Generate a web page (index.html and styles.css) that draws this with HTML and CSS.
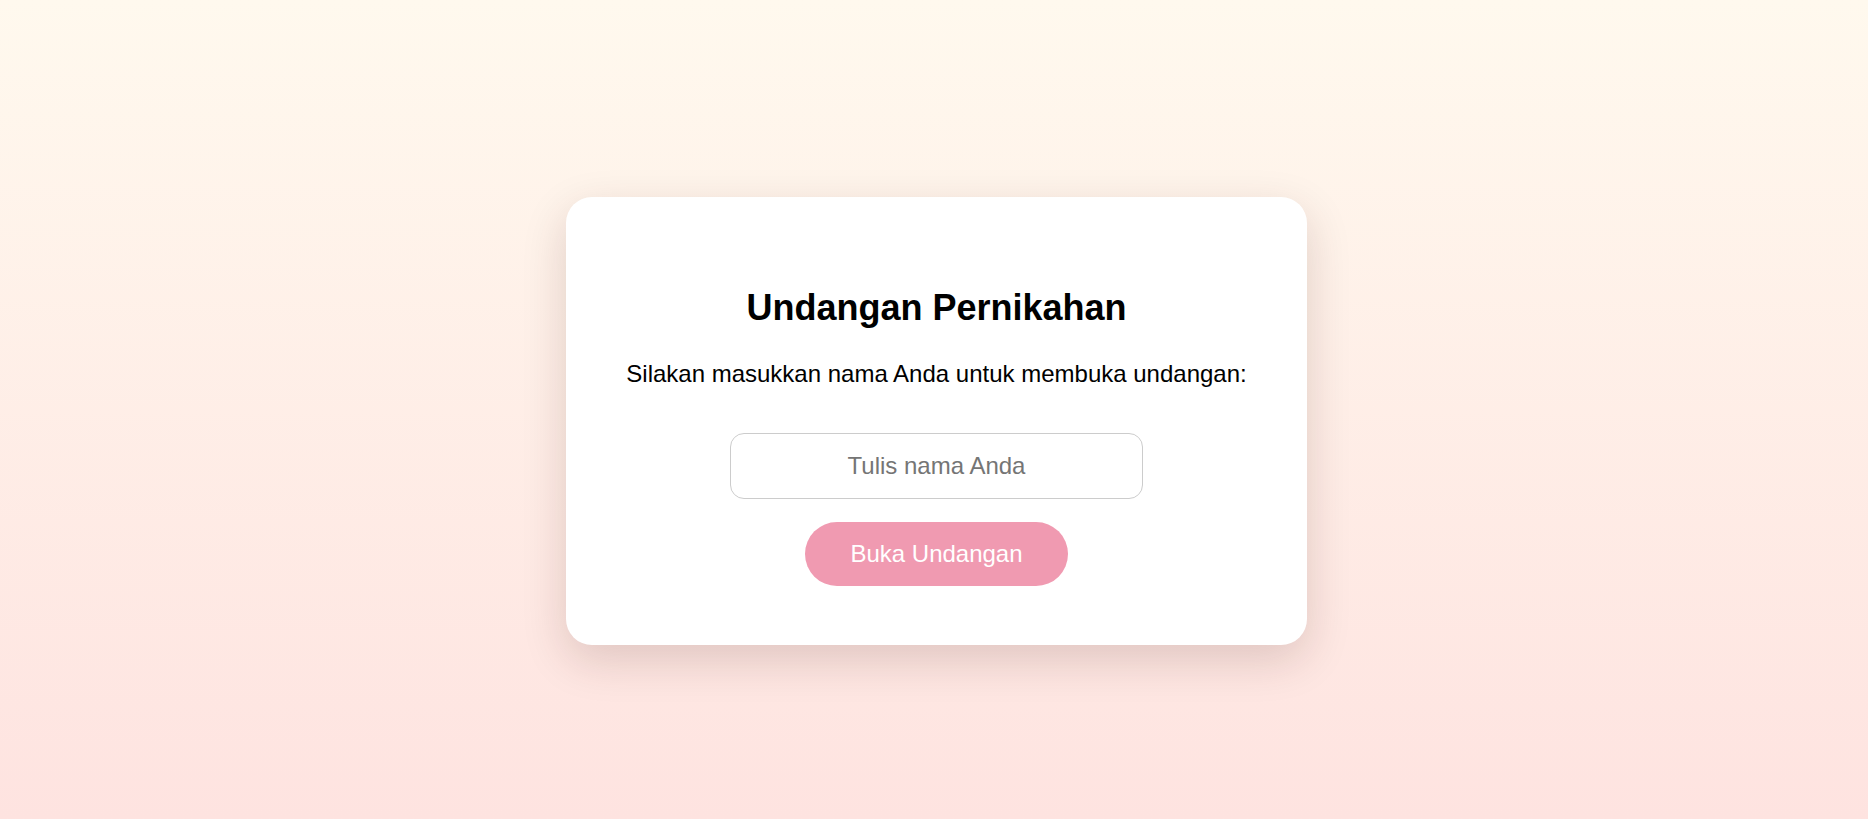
FILE: index.html
```html
<!DOCTYPE html>
<html lang="id">
<head>
<meta charset="utf-8">
<title>Undangan Pernikahan</title>
<link rel="stylesheet" href="styles.css">
</head>
<body>
<main class="stage">
  <section class="card">
    <h2 class="title">Undangan Pernikahan</h2>
    <p class="lead">Silakan masukkan nama Anda untuk membuka undangan:</p>
    <input class="name-input" type="text" placeholder="Tulis nama Anda">
    <button class="open-btn" type="button">Buka Undangan</button>
  </section>
</main>
</body>
</html>
```

FILE: styles.css
```css
* { box-sizing: border-box; }
html, body {
  margin: 0;
  height: 100%;
}
body {
  font-family: "Liberation Sans", Arial, sans-serif;
  background: linear-gradient(to bottom, #fff9ee 0%, #fee3e0 100%);
  color: #000;
}
.stage {
  min-height: 100vh;
  display: flex;
  align-items: center;
  justify-content: center;
  padding: 23px 0 0 5px;
}
.card {
  width: 741px;
  background: #fff;
  border-radius: 26px;
  box-shadow: 0 15px 45px rgba(60, 20, 10, 0.16);
  padding: 60px 40px 59px;
  display: flex;
  flex-direction: column;
  align-items: center;
  text-align: center;
}
.title {
  font-size: 36px;
  font-weight: bold;
  line-height: 41px;
  margin: 30px 0 32px;
}
.lead {
  font-size: 24px;
  line-height: 27px;
  margin: 0 0 46px;
}
.name-input {
  width: 413px;
  height: 66px;
  border: 1.5px solid #ccc;
  border-radius: 14px;
  font-family: "Liberation Sans", Arial, sans-serif;
  font-size: 24px;
  text-align: center;
  padding: 0 18px;
  background: #fff;
  outline: none;
}
.name-input::placeholder { color: #757575; }
.open-btn {
  margin-top: 23px;
  height: 64px;
  padding: 0 45px;
  border: none;
  border-radius: 40px;
  background: #f09ab1;
  color: #fff;
  font-family: "Liberation Sans", Arial, sans-serif;
  font-size: 24px;
}
```
